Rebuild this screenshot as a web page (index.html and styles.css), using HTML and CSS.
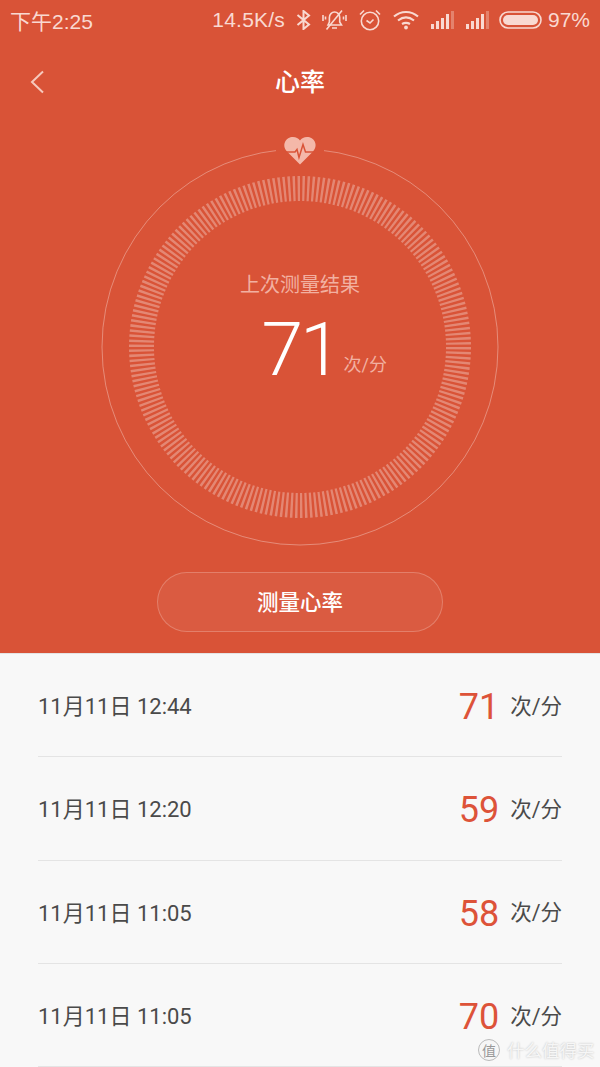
FILE: index.html
```html
<!DOCTYPE html>
<html lang="zh-CN">
  <head>
    <meta charset="UTF-8" />
    <meta name="viewport" content="width=device-width, initial-scale=1.0" />
    <title>心率</title>
    <link rel="stylesheet" href="styles.css">
  </head>
  <body>
    <div class="page">
      <div class="top">
        <div class="status-bar">
          <span class="clock">下午2:25</span>
          <div class="status-right">
            <span class="speed">14.5K/s</span>
            <svg class="ic-bt" width="15" height="20" viewBox="0 0 15 20"><path d="M1.500 5 13 14.500 7.500 19V1L13 5.500 1.500 15" fill="none" stroke="currentColor" stroke-width="2"/></svg>
            <svg class="ic-bell" width="25" height="22" viewBox="0 0 25 22" fill="none" stroke="currentColor" stroke-width="1.6"><path d="M6 16H19.500L17.700 13V8.500C17.700 5.500 15.500 3 12.500 3 9.800 3 7.400 5.500 7.400 8.500V13ZM10 19H15M1 6V12M3.500 7.500V10.500M24 6V12M21.500 7.500V10.500"/><path d="M4.500 20.500 20 1.500"/></svg>
            <svg class="ic-alarm" width="22" height="22" viewBox="0 0 22 22" fill="none" stroke="currentColor" stroke-width="1.6"><circle cx="11" cy="12" r="8.700"/><path d="M7.500 11.500 11 14 14.500 10.500M1 5.500 5 1.500M21 5.500 17 1.500"/></svg>
            <svg class="ic-wifi" width="26" height="20" viewBox="0 0 26 20" fill="none" stroke="currentColor" stroke-width="2.2"><path d="M1 6.500C8 .5 18 .5 25 6.500M5 10.500C10 6.500 16 6.500 21 10.500M9 14C11.500 12.500 14.500 12.500 17 14"/><circle cx="13" cy="17.500" r="1.900" fill="currentColor" stroke="none"/></svg>
            <svg class="ic-signal" width="23" height="20" viewBox="0 0 23 20" fill="currentColor"><rect x="0" y="14" width="3" height="5"/><rect x="5" y="11" width="3" height="8"/><rect x="10" y="8" width="3" height="11"/><rect x="15" y="4" width="3" height="15"/><rect x="20" y="1" width="3" height="18" opacity=".35"/></svg>
            <svg class="ic-signal" width="23" height="20" viewBox="0 0 23 20" fill="currentColor"><rect x="0" y="14" width="3" height="5"/><rect x="5" y="11" width="3" height="8"/><rect x="10" y="8" width="3" height="11"/><rect x="15" y="4" width="3" height="15"/><rect x="20" y="1" width="3" height="18" opacity=".35"/></svg>
            <svg class="ic-battery" width="43" height="18" viewBox="0 0 43 18"><rect x="1" y="1" width="41" height="16" rx="8" fill="none" stroke="currentColor" stroke-width="1.6"/><rect x="4" y="4" width="35" height="10" rx="5" fill="currentColor"/></svg>
            <span class="percent">97%</span>
          </div>
        </div>

        <div class="nav">
          <svg class="back" width="14" height="24" viewBox="0 0 14 24"><path d="M13 1.500 2 12 13 22.500" fill="none" stroke="currentColor" stroke-width="2"/></svg>
          <span class="nav-title">心率</span>
        </div>

        <div class="dial">
          <svg class="dial-art" width="400" height="420" viewBox="0 0 400 420">
            <circle class="ring" cx="200" cy="210" r="198"/>
            <circle class="ticks" cx="200" cy="210" r="158.500" pathLength="210"/>
            <rect class="ring-gap" x="176" y="0" width="48" height="26"/>
            <path class="heart" d="M200 27.500 187 14.500C181 8 186 0 193 0 196 0 198.500 1.500 200 3.500 201.500 1.500 204 0 207 0 214 0 219 8 213 14.500Z"/>
            <path class="pulse" d="M185 15H195L197 12.500 199 20.500 203 7.500 205.500 15H215"/>
          </svg>
          <div class="dial-text">
            <div class="dial-label">上次测量结果</div>
            <div class="dial-value">
              <span class="dial-num">71</span>
              <span class="dial-unit">次/分</span>
            </div>
          </div>
        </div>

        <div class="measure-btn">测量心率</div>
      </div>

      <div class="records">
        <div class="record">
          <span class="record-date">11月11日 12:44</span>
          <span class="record-num">71</span>
          <span class="record-unit">次/分</span>
        </div>
        <div class="record">
          <span class="record-date">11月11日 12:20</span>
          <span class="record-num">59</span>
          <span class="record-unit">次/分</span>
        </div>
        <div class="record">
          <span class="record-date">11月11日 11:05</span>
          <span class="record-num">58</span>
          <span class="record-unit">次/分</span>
        </div>
        <div class="record">
          <span class="record-date">11月11日 11:05</span>
          <span class="record-num">70</span>
          <span class="record-unit">次/分</span>
        </div>
      </div>

      <div class="watermark">
        <span class="mark-badge">值</span>
        <span class="mark-text">什么值得买</span>
      </div>
    </div>
  </body>
</html>
```

FILE: styles.css
```css
body {
  margin: 0;
  font-family: Roboto, "Noto Sans CJK SC", sans-serif;
}

.page {
  position: relative;
  width: 600px;
  height: 1067px;
  overflow: hidden;
  background-color: #f8f8f8;
}

.top {
  height: 653px;
  background-color: #d95337;
  color: #fff;
}

/* status bar */
.status-bar {
  display: flex;
  justify-content: space-between;
  align-items: center;
  height: 40px;
  padding: 0 10px;
  color: #f9d9d1;
  font-family: "Liberation Sans", "Noto Sans CJK SC", sans-serif;
  font-size: 21px;
}

.status-right {
  display: flex;
  align-items: center;
}

.speed {
  letter-spacing: 0.2px;
}

.ic-bt {
  margin-left: 11px;
}

.ic-bell {
  margin-left: 11px;
}

.ic-alarm {
  margin-left: 12px;
}

.ic-wifi {
  margin-left: 12px;
}

.ic-signal {
  margin-left: 12px;
}

.ic-battery {
  margin-left: 10px;
}

.percent {
  margin-left: 6px;
}

/* nav */
.nav {
  position: relative;
  display: flex;
  justify-content: center;
  align-items: center;
  height: 80px;
}

.back {
  position: absolute;
  left: 30px;
  top: 30px;
  color: #f6c9bd;
}

.nav-title {
  font-size: 25px;
  font-weight: 500;
}

/* dial */
.dial {
  display: grid;
  justify-content: center;
  margin-top: 17px;
}

.dial-art,
.dial-text {
  grid-area: 1 / 1;
}

.ring {
  fill: none;
  stroke: rgba(255, 255, 255, 0.33);
  stroke-width: 1;
}

.ticks {
  fill: none;
  stroke: rgba(255, 255, 255, 0.3);
  stroke-width: 25;
  stroke-dasharray: 0.5 0.5;
}

.ring-gap {
  fill: #d95337;
}

.heart {
  fill: #f4b8a9;
}

.pulse {
  fill: none;
  stroke: #d95337;
  stroke-width: 1.500;
}

.dial-text {
  padding-top: 134px;
  text-align: center;
}

.dial-label {
  font-size: 20px;
  line-height: 28px;
  color: #f2b0a1;
}

.dial-value {
  display: grid;
  grid-template-columns: 1fr auto 1fr;
  margin-top: 4px;
}

.dial-num {
  grid-column: 2;
  font-size: 75px;
  font-weight: 300;
  line-height: 92px;
  letter-spacing: -3px;
}

.dial-unit {
  align-self: end;
  margin: 0 0 18px 5px;
  text-align: left;
  font-size: 18px;
  line-height: 24px;
  color: #f2b0a1;
}

.measure-btn {
  display: flex;
  justify-content: center;
  align-items: center;
  box-sizing: border-box;
  width: 286px;
  height: 60px;
  margin: 15px auto 0;
  padding-bottom: 3px;
  background-color: rgba(255, 255, 255, 0.05);
  border: 1px solid rgba(255, 255, 255, 0.22);
  border-radius: 30px;
  font-size: 21.500px;
  font-weight: 500;
}

/* list */
.records {
  border-top: 1px solid #e4e4e4;
  padding: 0 38px;
}

.record {
  display: flex;
  align-items: center;
  height: 102.300px;
  border-bottom: 1px solid #e4e4e4;
  color: #4a4a4a;
}

.record-date {
  flex: 1;
  padding-bottom: 2px;
  font-size: 22px;
}

.record-num {
  padding-top: 4px;
  font-size: 36px;
  color: #dd5339;
}

.record-unit {
  margin-left: 11px;
  padding-bottom: 2px;
  font-size: 21.500px;
}

.watermark {
  position: absolute;
  left: 478px;
  top: 1037px;
  display: flex;
  align-items: center;
}

.mark-badge {
  display: flex;
  justify-content: center;
  align-items: center;
  box-sizing: border-box;
  width: 22px;
  height: 22px;
  border: 1px solid #bbb;
  border-radius: 50%;
  background-color: #f6f6f6;
  color: #999;
  font-size: 14px;
}

.mark-text {
  margin-left: 7px;
  font-size: 17.500px;
  color: #f6f6f6;
  text-shadow: 0 0 2px #bbb;
}
```
